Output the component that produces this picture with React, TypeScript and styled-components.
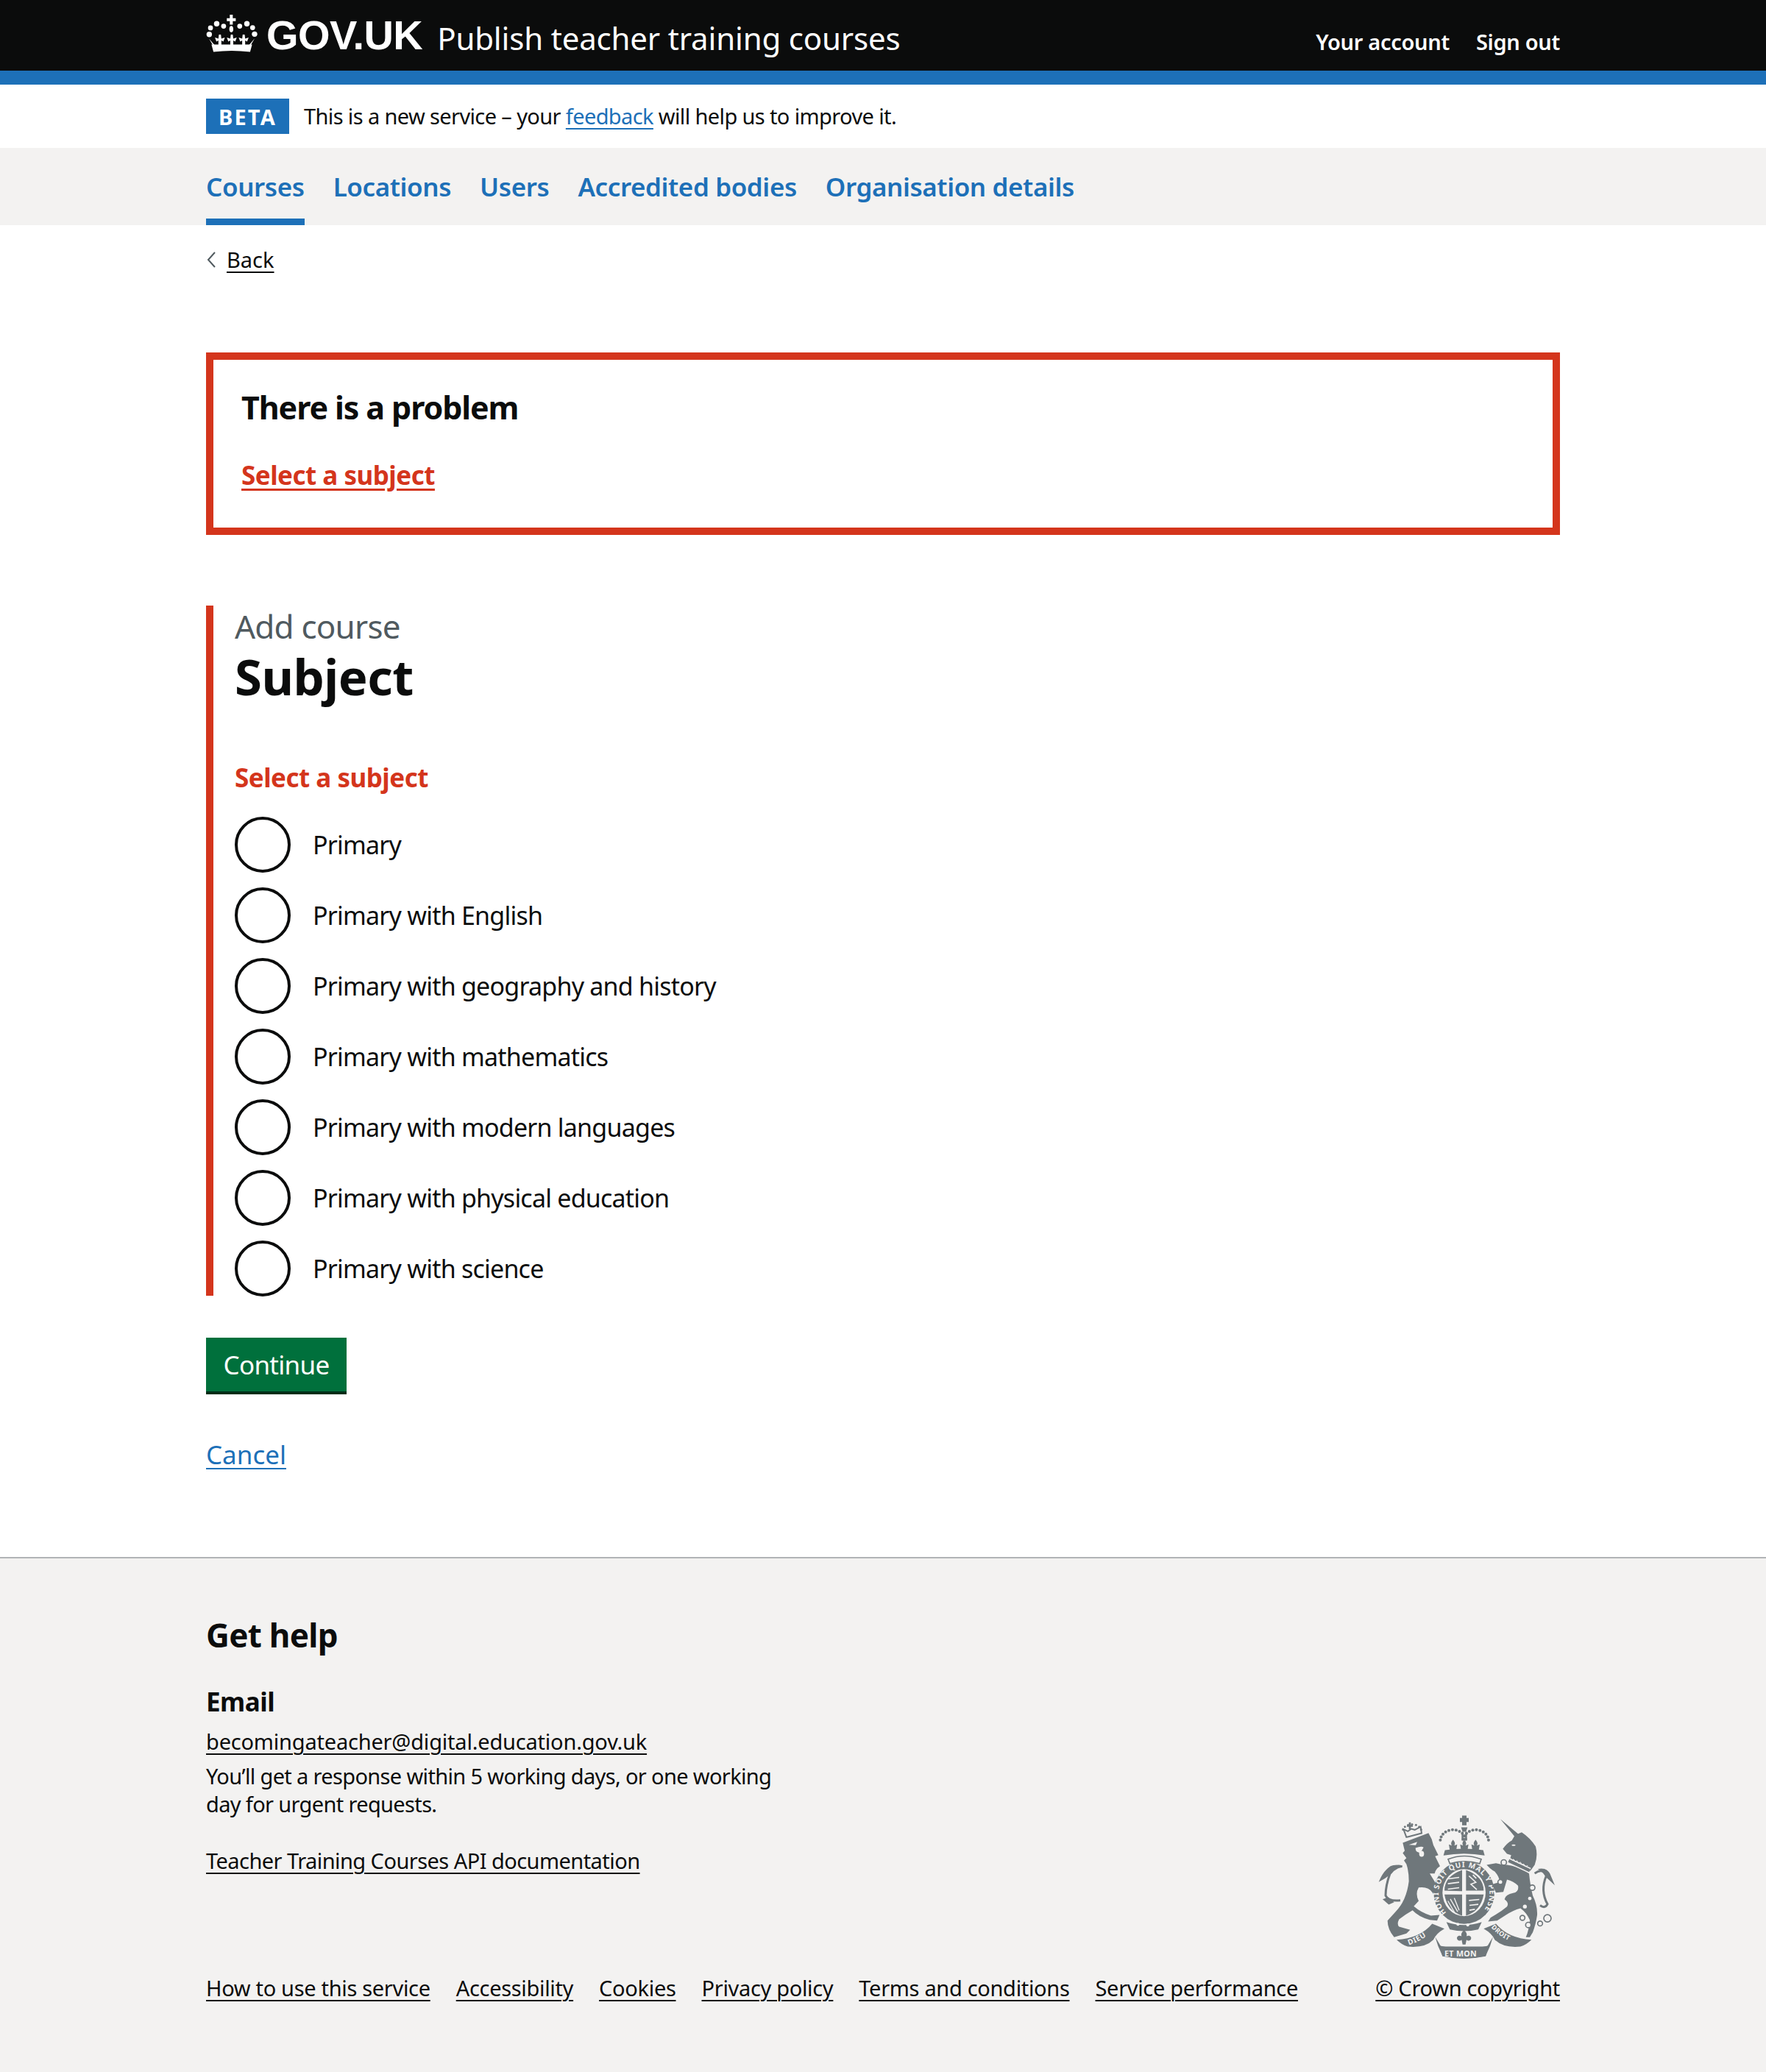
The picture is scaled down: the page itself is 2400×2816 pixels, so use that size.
import React from "react";
import styled, { createGlobalStyle } from "styled-components";

const FONT = `"Noto Sans", "Liberation Sans", Arial, sans-serif`;

const GlobalStyle = createGlobalStyle`
  html, body { margin: 0; padding: 0; background: #fff; }
  body { font-family: ${FONT}; color: #0b0c0c; }
  * { box-sizing: border-box; }
`;

const Container = styled.div`
  width: 1840px;
  margin: 0 auto;
`;

const Header = styled.header`
  background: #0b0c0c;
  height: 115px;
  border-bottom: 19px solid #1d70b8;
`;

const HeaderInner = styled(Container)`
  display: flex;
  align-items: center;
  height: 96px;
`;

const Logo = styled.a`
  display: flex;
  align-items: center;
  color: #fff;
  text-decoration: none;
`;

const LogoMark = styled.svg`
  width: 70px;
  height: 52px;
  margin-right: 12px;
  margin-top: -6px;
`;

const LogoText = styled.span`
  font-family: "Liberation Sans", Arial, sans-serif;
  font-weight: 700;
  font-size: 56px;
  line-height: 60px;
  letter-spacing: -0.6px;
`;

const ServiceName = styled.span`
  color: #fff;
  font-size: 42px;
  line-height: 60px;
  margin-left: 20px;
  margin-top: 8px;
  letter-spacing: -0.17px;
`;

const AccountNav = styled.nav`
  margin-left: auto;
  display: flex;
  gap: 36px;
  margin-top: 18px;
`;

const AccountLink = styled.a`
  color: #fff;
  font-weight: 600;
  font-size: 29px;
  line-height: 40px;
  letter-spacing: -0.3px;
  text-decoration: none;
`;

const PhaseBanner = styled(Container)`
  height: 86px;
  display: flex;
  align-items: center;
  gap: 20px;
`;

const PhaseTag = styled.strong`
  background: #1d70b8;
  color: #fff;
  width: 113px;
  height: 48px;
  display: flex;
  align-items: center;
  justify-content: center;
  font-size: 29px;
  font-weight: 700;
  letter-spacing: 2.2px;
`;

const PhaseText = styled.span`
  font-size: 29px;
  line-height: 40px;
  letter-spacing: -0.62px;
`;

const BlueLink = styled.a`
  color: #1d70b8;
  text-decoration: underline;
  text-underline-offset: 5px;
  text-decoration-thickness: 2px;
`;

const NavBar = styled.div`
  background: #f3f2f1;
  height: 105px;
`;

const NavList = styled(Container)`
  display: flex;
  gap: 39px;
  height: 105px;
`;

const NavItem = styled.a<{ $active?: boolean }>`
  color: #1d70b8;
  font-weight: 600;
  font-size: 35px;
  line-height: 50px;
  letter-spacing: -0.4px;
  padding-top: 28px;
  text-decoration: none;
  border-bottom: 9px solid ${(p) => (p.$active ? "#1d70b8" : "transparent")};
`;

const BackLink = styled.a`
  display: flex;
  width: fit-content;
  align-items: center;
  margin-top: 27px;
  height: 40px;
  color: #0b0c0c;
  font-size: 29px;
  line-height: 40px;
  text-decoration: underline;
  text-underline-offset: 5px;
  text-decoration-thickness: 2px;
`;

const BackChevron = styled.svg`
  width: 14px;
  height: 24px;
  margin-right: 14px;
`;

const ErrorSummary = styled.div`
  margin-top: 106px;
  height: 248px;
  border: 10px solid #d4351c;
  padding: 35px 38px;
`;

const ErrorTitle = styled.h2`
  margin: 0;
  font-size: 43px;
  line-height: 60px;
  font-weight: 700;
  letter-spacing: -1.1px;
`;

const ErrorLink = styled.a`
  display: block;
  width: fit-content;
  margin-top: 37px;
  color: #d4351c;
  font-size: 35px;
  line-height: 50px;
  font-weight: 700;
  letter-spacing: -0.5px;
  text-decoration: underline;
  text-underline-offset: 5px;
`;

const ErrorGroup = styled.div`
  margin-top: 96px;
  border-left: 10px solid #d4351c;
  padding-left: 29px;
  height: 938px;
`;

const Caption = styled.div`
  color: #505a5f;
  font-size: 44px;
  line-height: 57px;
  letter-spacing: -0.8px;
`;

const PageTitle = styled.h1`
  margin: 0;
  font-size: 67px;
  line-height: 78px;
  font-weight: 700;
  letter-spacing: -0.5px;
`;

const Legend = styled.div`
  margin-top: 74px;
  color: #d4351c;
  font-size: 35px;
  line-height: 50px;
  font-weight: 700;
  letter-spacing: -0.5px;
`;

const RadioList = styled.div`
  margin-top: 28px;
  display: flex;
  flex-direction: column;
  gap: 20px;
`;

const RadioRow = styled.label`
  display: flex;
  align-items: center;
  height: 76px;
`;

const RadioCircle = styled.span`
  width: 76px;
  height: 76px;
  border: 4px solid #0b0c0c;
  border-radius: 50%;
  margin-right: 30px;
`;

const RadioLabel = styled.span`
  font-size: 34px;
  line-height: 50px;
  letter-spacing: -0.78px;
`;

const ContinueButton = styled.button`
  display: block;
  margin-top: 57px;
  width: 191px;
  height: 77px;
  padding: 0 0 4px;
  border: none;
  background: #00703c;
  box-shadow: inset 0 -4px 0 #002d18;
  color: #fff;
  font-family: ${FONT};
  font-size: 35px;
  line-height: 50px;
  letter-spacing: -0.7px;
`;

const CancelLink = styled(BlueLink)`
  display: block;
  width: fit-content;
  margin-top: 57px;
  font-size: 35px;
  line-height: 50px;
`;

const Footer = styled.footer`
  margin-top: 114px;
  height: 700px;
  background: #f3f2f1;
  border-top: 2px solid #b1b4b6;
  padding-top: 74px;
`;

const FooterInner = styled(Container)`
  display: flex;
  justify-content: space-between;
`;

const FooterHeading = styled.h2`
  margin: 0;
  font-size: 44px;
  line-height: 60px;
  font-weight: 700;
  letter-spacing: -0.7px;
`;

const FooterLabel = styled.div`
  margin-top: 36px;
  font-size: 35px;
  line-height: 50px;
  font-weight: 700;
  letter-spacing: -0.5px;
`;

const FooterLink = styled.a<{ $tracking?: number }>`
  color: #0b0c0c;
  font-size: 29px;
  line-height: 40px;
  letter-spacing: ${(p) => p.$tracking ?? -0.32}px;
  text-decoration: underline;
  text-underline-offset: 5px;
  text-decoration-thickness: 2px;
`;

const FooterBlockLink = styled(FooterLink)<{ $top: number }>`
  display: block;
  margin-top: ${(p) => p.$top}px;
`;

const FooterText = styled.p`
  margin: 8px 0 0;
  width: 800px;
  font-size: 29px;
  line-height: 38px;
  letter-spacing: -0.65px;
`;

const MetaLinks = styled.div`
  display: flex;
  gap: 35px;
  margin-top: 133px;
`;

const CopyrightColumn = styled.div`
  display: flex;
  flex-direction: column;
  align-items: flex-end;
  justify-content: flex-end;
`;

const CrestSvg = styled.svg`
  width: 240px;
  height: 197px;
  margin-right: 7px;
  margin-bottom: 19px;
`;

const arcPoints = (cx: number, cy: number, rx: number, ry: number, n: number, from: number, to: number) =>
  Array.from({ length: n }, (_, i) => {
    const a = ((from + ((to - from) * i) / (n - 1)) * Math.PI) / 180;
    return [cx + rx * Math.cos(a), cy - ry * Math.sin(a)];
  });

const GovCrown = () => (
  <LogoMark viewBox="62 30 208 152" fill="#fff">
    <path d="M158 32h12v14h12v12h-12v14h-12V58h-12V46h12z" />
    <ellipse cx="164" cy="90" rx="8" ry="13" />
    <circle cx="75" cy="111" r="11" />
    <circle cx="80" cy="85" r="10" />
    <circle cx="105" cy="68" r="11" />
    <circle cx="133" cy="78" r="10" />
    <circle cx="198" cy="78" r="10" />
    <circle cx="227" cy="68" r="11" />
    <circle cx="250" cy="84" r="10" />
    <circle cx="258" cy="110" r="11" />
    <path d="M84 152h164l-8 30q-75-9-148 0z" />
    <path d="M74 128l24 28h-8zM258 128l-24 28h8z" />
    {[118, 166, 214].map((x) => (
      <path key={x} d={`M${x - 4} 112h8l2 16 14-4-6 16-8-4v20h-12v-20l-8 4-6-16 14 4z`} />
    ))}
  </LogoMark>
);

const Crest = () => {
  const grey = "#6f777b";
  const bg = "#f3f2f1";
  return (
    <CrestSvg viewBox="220 80 720 590" fill={grey}>
      <defs>
        <path id="garter" d="M498 480 A104 108 0 1 1 642 480" />
        <path id="dieu" d="M345 612 Q405 592 450 548" />
        <path id="droit" d="M680 540 Q725 590 800 612" />
      </defs>

      {/* lion */}
      <path d="M320 195 425 155l13 25 7 25 20 40-13 5 20 40q-17 10-22 30h-20l35 57 20 35-10 18q-20-8-35-33-15-25-55-20-15 25 0 55l-20 22q30 26 70 38l35-3-10 23-30-3q-45-12-70-39-30 17-55 37-10 20 0 30l45 13-15 15-50 15q-27-33-27-68l32-35q45-45 55-125 0-40-10-70l-10-15 10-10-15-20 8-10z" />
      <path d="M345 203l34-12-6 14zM372 216q25-10 33-2l-13 22q-4 0-8-2-12-2-12-18z" fill={bg} />
      <ellipse cx="397" cy="240" rx="10" ry="12" fill={bg} />
      <path d="M318 292q-38-12-50 28-18 50-18 90 10 25 60 20" fill="none" stroke={grey} strokeWidth="9" />
      <path d="M222 355q18-45 48-65 30-10 48 5-28 5-43 25-25 20-53 35zM238 425l22-8 25 20-22 10z" />
      <path d="m335 172-12-32 18 8 14-10 14 4 16-8 8-4 4 26-54 14z" fill="none" stroke={grey} strokeWidth="6" />
      <path d="M345 112h8v10h8v8h-8v10h-8v-10h-8v-8h8z" />
      {arcPoints(358, 148, 38, 28, 7, 15, 165).map(([x, y], i) => (
        <circle key={i} cx={x} cy={y} r="4.5" />
      ))}

      {/* crown */}
      <path d="M562 84h18v10h9v16h-9v14h-18v-14h-9V94h9z" />
      <path d="M558 132h26l-6 18h-14z" />
      <rect x="560" y="150" width="7" height="36" />
      <rect x="575" y="150" width="7" height="36" />
      {arcPoints(525, 188, 52, 46, 11, 10, 175).map(([x, y], i) => (
        <circle key={`l${i}`} cx={x} cy={y} r="6" />
      ))}
      {arcPoints(618, 188, 52, 46, 11, 5, 170).map(([x, y], i) => (
        <circle key={`r${i}`} cx={x} cy={y} r="6" />
      ))}
      <path d="M492 225q78-12 156 0l6 22q-84-16-168 0z" />
      {[525, 571, 617].map((x) => (
        <path key={x} d={`M${x} 182q12 14 5 24l12-4-4 24h-26l-4-24 12 4q-7-10 5-24z`} />
      ))}
      <path d="M505 262q65-26 135 0l-6 18q-62-18-122 0z" fill={bg} stroke={grey} strokeWidth="5" />

      {/* garter and shield */}
      <ellipse cx="570" cy="398" rx="124" ry="128" />
      <path d="M498 518q72 24 144 0l-14 30q-58 14-116 0z" />
      <text fill={bg} fontFamily={FONT} fontWeight="700" fontSize="30" letterSpacing="2.5">
        <textPath href="#garter">HONI SOIT QUI MAL Y PENSE</textPath>
      </text>
      <ellipse cx="570" cy="398" rx="88" ry="96" fill={bg} />
      <path d="M490 390q0-58 72-84v86zM578 306q72 26 72 84h-72zM490 406h72v86q-60-18-72-86zM578 406h72q-12 68-72 86z" />
      <path d="M506 342l44-6M504 362l46-6M504 384l46-6M590 430l42-4M592 450l36-4M592 470l22-4" stroke={bg} strokeWidth="5" fill="none" />
      <path d="M590 330l28 26-20 8 24 22M606 326l14 14" fill="none" stroke={bg} strokeWidth="5" />
      <path d="M514 424l30 52M530 420l20 50M504 432l28 48" fill="none" stroke={bg} strokeWidth="4" />
      <circle cx="545" cy="527" r="6" fill={bg} />
      <circle cx="585" cy="530" r="6" fill={bg} />

      {/* unicorn */}
      <path d="M718 98l72 60 15-6q35 23 57 58 10 40-4 75l-18 25-50-10-35-30 7-25-17-5-17-20q17-25 37-35l10-17z" />
      <ellipse cx="772" cy="205" rx="8" ry="3" fill={bg} />
      <path d="M745 285q45 5 90 35 5 50 15 90 20 40 18 80-6 40-18 70l-12 20h-16q13-30 16-70-13-30-38-48-30 8-60 28l-35 22-37 4 10-16q37-20 67-45 10-15-10-30 5-20 35-25 25-5 20-30-20-20-45-25l-15 50-30 3q-10-23-18-33l33-10q0-20-20-43-15-7-33-27l38-7q25 7 45 7z" />
      <path d="M752 268l86 40" stroke={bg} strokeWidth="22" fill="none" />
      <path d="M752 268l86 40" stroke={grey} strokeWidth="13" fill="none" />
      <path d="M760 258l6 8 6-4 6 10 8-4 6 10 8-4 6 10 8-2 6 10 10-4" stroke={bg} strokeWidth="3" fill="none" />
      <path d="M858 320q32-25 47 10-25 60 5 115-10 20-30 5" fill="none" stroke={grey} strokeWidth="9" />
      <path d="M870 302q35-8 50 18l20 48-35-32q-15-25-35-34z" />
      {[[732, 275, 11], [718, 355, 10], [848, 378, 11], [808, 501, 10], [832, 530, 11], [880, 524, 10], [910, 503, 15]].map(([x, y, r], i) => (
        <circle key={i} cx={x} cy={y} r={r} fill={bg} stroke={grey} strokeWidth="5" />
      ))}
      <circle cx="818" cy="455" r="8" fill={bg} />
      <circle cx="838" cy="422" r="7" fill={bg} />

      {/* motto ribbon */}
      <path d="M295 590q95-5 145-65l50 20q-35 20-45 45-35 35-105 28-25-8-45-28z" />
      <path d="M845 590q-95-5-145-65l-50 20q35 20 45 45 35 35 105 28 25-8 45-28z" />
      <path d="M452 578l24 40 188 0 24-40-12 38-18 40q-88 20-176 0l-18-40z" />
      <path d="M470 614q100 24 200 0l-12 44q-88 18-176 0z" />
      <text fill={bg} fontFamily={FONT} fontWeight="700" fontSize="30" letterSpacing="2">
        <textPath href="#dieu">DIEU</textPath>
      </text>
      <text fill={bg} fontFamily={FONT} fontWeight="700" fontSize="27" letterSpacing="1">
        <textPath href="#droit">DROIT</textPath>
      </text>
      <text fill={bg} fontFamily={FONT} fontWeight="700" fontSize="32" letterSpacing="1" x="490" y="657">
        ET MON
      </text>
      <path d="M570 550c8 10 14 16 10 26 12-6 22 2 18 12-4 8-14 8-18 2l-4 20h-12l-4-20c-4 6-14 6-18-2-4-10 6-18 18-12-4-10 2-16 10-26z" />
    </CrestSvg>
  );
};

const SUBJECTS = [
  "Primary",
  "Primary with English",
  "Primary with geography and history",
  "Primary with mathematics",
  "Primary with modern languages",
  "Primary with physical education",
  "Primary with science",
];

const NAV_ITEMS = ["Courses", "Locations", "Users", "Accredited bodies", "Organisation details"];

const META_ITEMS = [
  "How to use this service",
  "Accessibility",
  "Cookies",
  "Privacy policy",
  "Terms and conditions",
  "Service performance",
];

export default function App() {
  return (
    <>
      <GlobalStyle />
      <Header>
        <HeaderInner>
          <Logo href="#">
            <GovCrown />
            <LogoText>GOV.UK</LogoText>
          </Logo>
          <ServiceName>Publish teacher training courses</ServiceName>
          <AccountNav>
            <AccountLink href="#">Your account</AccountLink>
            <AccountLink href="#">Sign out</AccountLink>
          </AccountNav>
        </HeaderInner>
      </Header>

      <PhaseBanner>
        <PhaseTag>BETA</PhaseTag>
        <PhaseText>
          This is a new service – your <BlueLink href="#">feedback</BlueLink> will help us to improve it.
        </PhaseText>
      </PhaseBanner>

      <NavBar>
        <NavList>
          {NAV_ITEMS.map((item, i) => (
            <NavItem key={item} href="#" $active={i === 0}>
              {item}
            </NavItem>
          ))}
        </NavList>
      </NavBar>

      <Container>
        <BackLink href="#">
          <BackChevron viewBox="0 0 14 24">
            <path d="M12 2 3 12l9 10" fill="none" stroke="#505a5f" strokeWidth="2" />
          </BackChevron>
          Back
        </BackLink>

        <ErrorSummary>
          <ErrorTitle>There is a problem</ErrorTitle>
          <ErrorLink href="#">Select a subject</ErrorLink>
        </ErrorSummary>

        <ErrorGroup>
          <Caption>Add course</Caption>
          <PageTitle>Subject</PageTitle>
          <Legend>Select a subject</Legend>
          <RadioList>
            {SUBJECTS.map((subject) => (
              <RadioRow key={subject}>
                <RadioCircle />
                <RadioLabel>{subject}</RadioLabel>
              </RadioRow>
            ))}
          </RadioList>
        </ErrorGroup>

        <ContinueButton>Continue</ContinueButton>
        <CancelLink href="#">Cancel</CancelLink>
      </Container>

      <Footer>
        <FooterInner>
          <div>
            <FooterHeading>Get help</FooterHeading>
            <FooterLabel>Email</FooterLabel>
            <FooterBlockLink href="#" $top={9} $tracking={-0.2}>
              becomingateacher@digital.education.gov.uk
            </FooterBlockLink>
            <FooterText>
              You’ll get a response within 5 working days, or one working day for urgent requests.
            </FooterText>
            <FooterBlockLink href="#" $top={38} $tracking={-0.55}>
              Teacher Training Courses API documentation
            </FooterBlockLink>
            <MetaLinks>
              {META_ITEMS.map((item) => (
                <FooterLink key={item} href="#">
                  {item}
                </FooterLink>
              ))}
            </MetaLinks>
          </div>
          <CopyrightColumn>
            <Crest />
            <FooterLink href="#" $tracking={-0.3}>
              © Crown copyright
            </FooterLink>
          </CopyrightColumn>
        </FooterInner>
      </Footer>
    </>
  );
}
